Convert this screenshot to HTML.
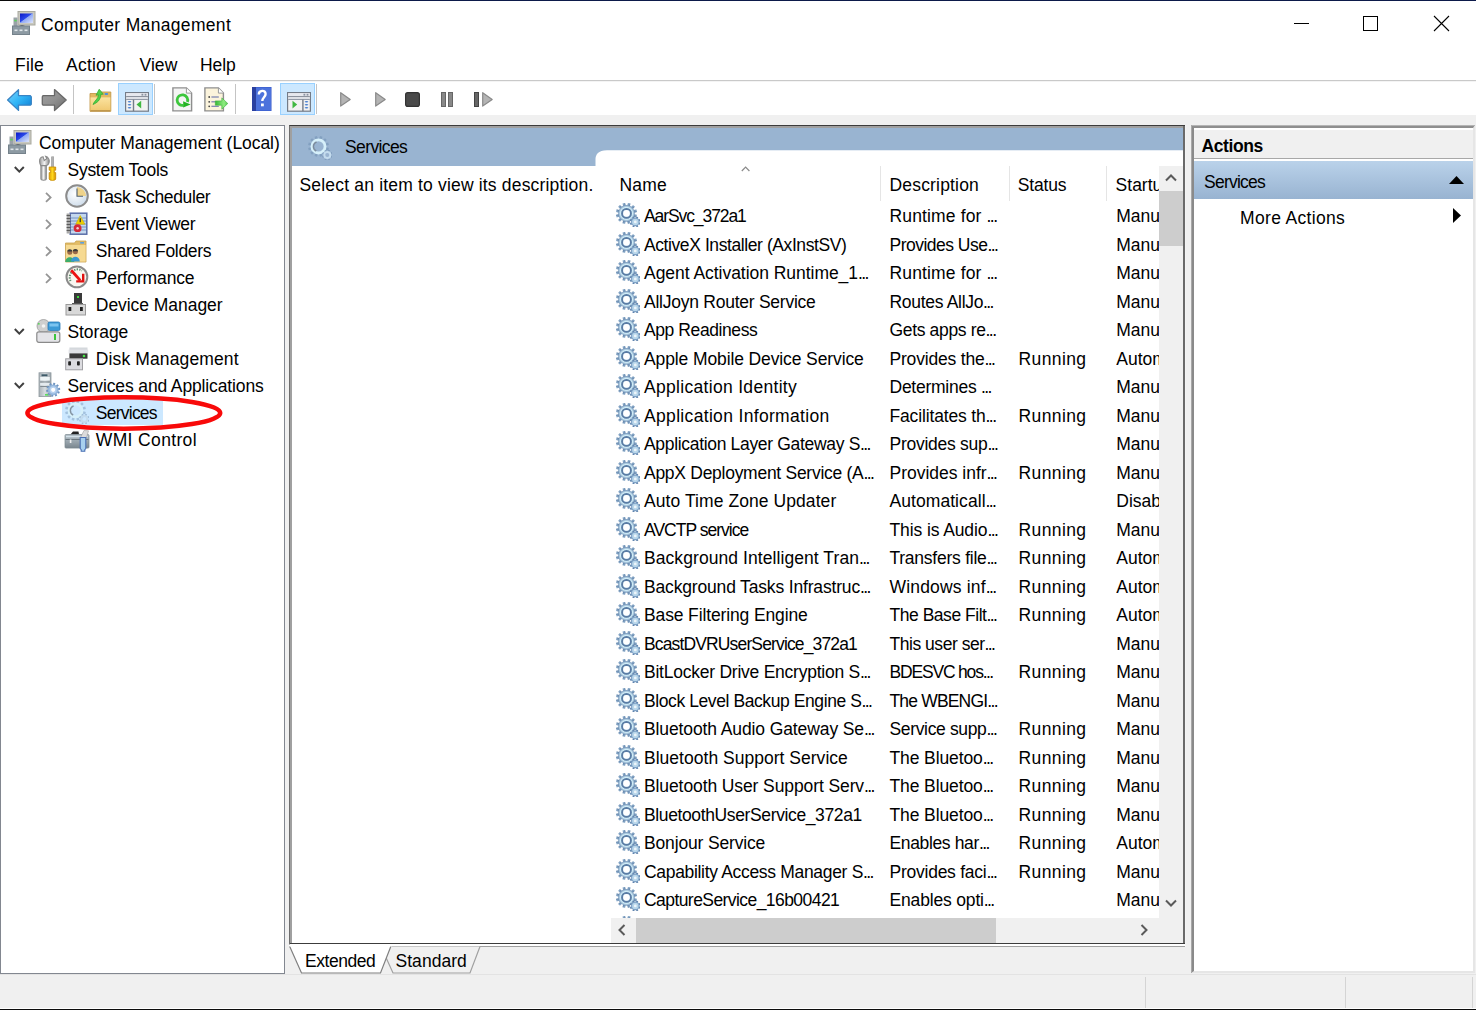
<!DOCTYPE html><html><head><meta charset="utf-8"><style>
html,body{margin:0;padding:0;width:1476px;height:1010px;overflow:hidden;background:#fff}
body{position:relative;font-family:"Liberation Sans",sans-serif;font-size:17.5px;color:#000}
.t{position:absolute;white-space:nowrap;line-height:20px}
.b{position:absolute;box-sizing:border-box}
svg{position:absolute;overflow:visible}
</style></head><body>

<svg width="0" height="0" style="position:absolute">
<defs>
<radialGradient id="gearG" cx="0.45" cy="0.4" r="0.6"><stop offset="0" stop-color="#e4f2fb"/><stop offset="0.6" stop-color="#a9cde6"/><stop offset="1" stop-color="#6f93b3"/></radialGradient>
<symbol id="gear" viewBox="0 0 24 24"><defs><linearGradient id="gT" x1="0" y1="0" x2="1" y2="1"><stop offset="0" stop-color="#9cbad6"/><stop offset="1" stop-color="#4f739c"/></linearGradient><radialGradient id="gB" cx="0.5" cy="0.5" r="0.5"><stop offset="0.5" stop-color="#a8d0ea"/><stop offset="0.72" stop-color="#d2eef8"/><stop offset="1" stop-color="#7898bc"/></radialGradient></defs><g transform="translate(10.5,10.4)" fill="url(#gT)"><rect x="-1.35" y="-10.60" width="2.70" height="3.60" transform="rotate(15.0)"/><rect x="-1.35" y="-10.60" width="2.70" height="3.60" transform="rotate(45.0)"/><rect x="-1.35" y="-10.60" width="2.70" height="3.60" transform="rotate(75.0)"/><rect x="-1.35" y="-10.60" width="2.70" height="3.60" transform="rotate(105.0)"/><rect x="-1.35" y="-10.60" width="2.70" height="3.60" transform="rotate(135.0)"/><rect x="-1.35" y="-10.60" width="2.70" height="3.60" transform="rotate(165.0)"/><rect x="-1.35" y="-10.60" width="2.70" height="3.60" transform="rotate(195.0)"/><rect x="-1.35" y="-10.60" width="2.70" height="3.60" transform="rotate(225.0)"/><rect x="-1.35" y="-10.60" width="2.70" height="3.60" transform="rotate(255.0)"/><rect x="-1.35" y="-10.60" width="2.70" height="3.60" transform="rotate(285.0)"/><rect x="-1.35" y="-10.60" width="2.70" height="3.60" transform="rotate(315.0)"/><rect x="-1.35" y="-10.60" width="2.70" height="3.60" transform="rotate(345.0)"/></g><circle cx="10.5" cy="10.4" r="8.3" fill="url(#gB)"/><circle cx="10.5" cy="10.4" r="4.4" fill="none" stroke="#5a7ca4" stroke-width="2"/><circle cx="10.5" cy="10.4" r="3.3" fill="#fff"/><g transform="translate(19.3,18.9)" fill="#5f84ae"><rect x="-0.95" y="-5.50" width="1.90" height="2.60" transform="rotate(22.0)"/><rect x="-0.95" y="-5.50" width="1.90" height="2.60" transform="rotate(67.0)"/><rect x="-0.95" y="-5.50" width="1.90" height="2.60" transform="rotate(112.0)"/><rect x="-0.95" y="-5.50" width="1.90" height="2.60" transform="rotate(157.0)"/><rect x="-0.95" y="-5.50" width="1.90" height="2.60" transform="rotate(202.0)"/><rect x="-0.95" y="-5.50" width="1.90" height="2.60" transform="rotate(247.0)"/><rect x="-0.95" y="-5.50" width="1.90" height="2.60" transform="rotate(292.0)"/><rect x="-0.95" y="-5.50" width="1.90" height="2.60" transform="rotate(337.0)"/></g><circle cx="19.3" cy="18.9" r="4.3" fill="#7fa2c6"/><circle cx="19.3" cy="18.9" r="3.2" fill="#b8d6ea"/><circle cx="19.3" cy="18.9" r="1.4" fill="#eef5fa"/></symbol>
<symbol id="gearL" viewBox="0 0 24 24"><g transform="translate(10.5,10.4)" fill="#5a7aa0" fill-opacity="0.35"><rect x="-1.25" y="-10.40" width="2.50" height="3.40" transform="rotate(15.0)"/><rect x="-1.25" y="-10.40" width="2.50" height="3.40" transform="rotate(45.0)"/><rect x="-1.25" y="-10.40" width="2.50" height="3.40" transform="rotate(75.0)"/><rect x="-1.25" y="-10.40" width="2.50" height="3.40" transform="rotate(105.0)"/><rect x="-1.25" y="-10.40" width="2.50" height="3.40" transform="rotate(135.0)"/><rect x="-1.25" y="-10.40" width="2.50" height="3.40" transform="rotate(165.0)"/><rect x="-1.25" y="-10.40" width="2.50" height="3.40" transform="rotate(195.0)"/><rect x="-1.25" y="-10.40" width="2.50" height="3.40" transform="rotate(225.0)"/><rect x="-1.25" y="-10.40" width="2.50" height="3.40" transform="rotate(255.0)"/><rect x="-1.25" y="-10.40" width="2.50" height="3.40" transform="rotate(285.0)"/><rect x="-1.25" y="-10.40" width="2.50" height="3.40" transform="rotate(315.0)"/><rect x="-1.25" y="-10.40" width="2.50" height="3.40" transform="rotate(345.0)"/></g><circle cx="10.5" cy="10.4" r="6.6" fill="none" stroke="#d6f0fa" stroke-width="2.8"/><path d="M8.2 15 A5 5 0 0 1 8.6 5.8" fill="none" stroke="#6a7684" stroke-width="1.4" stroke-opacity="0.75"/><g transform="translate(19.3,18.9)" fill="#5a7aa0" fill-opacity="0.4"><rect x="-0.85" y="-5.30" width="1.70" height="2.50" transform="rotate(22.0)"/><rect x="-0.85" y="-5.30" width="1.70" height="2.50" transform="rotate(67.0)"/><rect x="-0.85" y="-5.30" width="1.70" height="2.50" transform="rotate(112.0)"/><rect x="-0.85" y="-5.30" width="1.70" height="2.50" transform="rotate(157.0)"/><rect x="-0.85" y="-5.30" width="1.70" height="2.50" transform="rotate(202.0)"/><rect x="-0.85" y="-5.30" width="1.70" height="2.50" transform="rotate(247.0)"/><rect x="-0.85" y="-5.30" width="1.70" height="2.50" transform="rotate(292.0)"/><rect x="-0.85" y="-5.30" width="1.70" height="2.50" transform="rotate(337.0)"/></g><circle cx="19.3" cy="18.9" r="3" fill="none" stroke="#c4dcee" stroke-width="2"/></symbol>
<linearGradient id="scrG" x1="0" y1="0" x2="1" y2="1"><stop offset="0" stop-color="#0a18c8"/><stop offset="0.45" stop-color="#2a48e8"/><stop offset="0.5" stop-color="#8fa8f4"/><stop offset="1" stop-color="#dfe6fb"/></linearGradient>
<symbol id="comp" viewBox="0 0 24 24">
<rect x="6" y="0.5" width="17" height="13.5" fill="#c9c9c0" stroke="#a9a99f" stroke-width="1"/>
<rect x="8" y="2.5" width="13" height="9.5" fill="url(#scrG)"/>
<rect x="1.5" y="6.5" width="4" height="9" fill="#9aa2a8"/>
<rect x="2.3" y="8.8" width="2.4" height="1.6" fill="#5ad35a"/>
<path d="M6 15.5 q4-3 8 0z" fill="#555"/>
<rect x="0.5" y="15" width="17" height="8.5" fill="#8d9aa3" stroke="#75828b" stroke-width="1"/>
<g fill="#e0e6ea"><rect x="2.5" y="18.5" width="3" height="1.6"/><rect x="7.5" y="18.5" width="3" height="1.6"/><rect x="12.5" y="18.5" width="3" height="1.6"/></g>
</symbol>
<linearGradient id="arrB" x1="0" y1="0" x2="0" y2="1"><stop offset="0" stop-color="#6cc7f7"/><stop offset="0.5" stop-color="#27a4ee"/><stop offset="1" stop-color="#1478c8"/></linearGradient>
<linearGradient id="arrG" x1="0" y1="0" x2="0" y2="1"><stop offset="0" stop-color="#a8a8a8"/><stop offset="0.5" stop-color="#858585"/><stop offset="1" stop-color="#5e5e5e"/></linearGradient>
</defs></svg>

<div class="b" style="left:0px;top:0px;width:1476px;height:1px;background:#0c1a4a"></div>
<div class="b" style="left:0px;top:0px;width:71px;height:1px;background:#0a0a0a"></div>
<svg style="left:12px;top:11px" width="24" height="24"><use href="#comp"/></svg>
<div class="t" style="left:41px;top:14.600000000000001px;letter-spacing:0.330px;">Computer Management</div>
<div class="b" style="left:1294px;top:23px;width:15px;height:1px;background:#000"></div>
<div class="b" style="left:1363px;top:16px;width:15px;height:15px;border:1px solid #000"></div>
<svg style="left:1433px;top:15px" width="17" height="17"><path d="M1 1L16 16M16 1L1 16" stroke="#000" stroke-width="1.1"/></svg>
<div class="t" style="left:15px;top:55px;letter-spacing:0.199px;">File</div>
<div class="t" style="left:66px;top:55px;letter-spacing:0.232px;">Action</div>
<div class="t" style="left:139.5px;top:55px;letter-spacing:0.058px;">View</div>
<div class="t" style="left:200px;top:55px;letter-spacing:-0.067px;">Help</div>
<div class="b" style="left:0px;top:80px;width:1476px;height:1px;background:#c9c9c9"></div>
<div class="b" style="left:0px;top:81px;width:1476px;height:1px;background:#f4f4f4"></div>
<div class="b" style="left:0px;top:115px;width:1476px;height:895px;background:#f0f0f0"></div>
<svg style="left:7px;top:89px" width="25" height="22"><defs><linearGradient id="abg" x1="0" y1="0" x2="1" y2="1"><stop offset="0" stop-color="#7cd4fc"/><stop offset="0.5" stop-color="#30b4f6"/><stop offset="1" stop-color="#0a78d0"/></linearGradient></defs><path d="M0.6 11 L11.5 0.6 V6.6 H23.3 L24.3 7.8 V15.2 L23.3 16.2 H11.5 V21.4 Z" fill="url(#abg)" stroke="#3a84c4" stroke-width="1.3" stroke-linejoin="round"/></svg>
<svg style="left:42px;top:89px" width="25" height="22"><defs><linearGradient id="afg" x1="0" y1="0" x2="1" y2="1"><stop offset="0" stop-color="#a0a0a0"/><stop offset="0.5" stop-color="#909090"/><stop offset="1" stop-color="#6a6a6a"/></linearGradient></defs><path d="M24.2 11 L12.5 0.6 V6.6 H1 L0.3 7.8 V15.2 L1 16.2 H12.5 V21.6 Z" fill="url(#afg)" stroke="#686868" stroke-width="1.3" stroke-linejoin="round"/></svg>
<div class="b" style="left:73px;top:85px;width:1px;height:29px;background:#c4c4c4"></div>
<svg style="left:89px;top:88px" width="23" height="24"><defs><linearGradient id="fdg" x1="0" y1="0" x2="0" y2="1"><stop offset="0" stop-color="#fbe3a0"/><stop offset="1" stop-color="#f0c870"/></linearGradient></defs><path d="M1 5.5 H11 L12 4 H21.8 V23.3 H1 Z" fill="#e2b860" stroke="#c49a4c" stroke-width="0.9"/><rect x="1.5" y="9.4" width="19.8" height="13.4" fill="url(#fdg)"/><rect x="1.5" y="22.3" width="19.8" height="1" fill="#b08840"/><rect x="15.5" y="5" width="3.6" height="2" rx="1" fill="#4a90e0"/><path d="M4 16.5 C5.5 12.5 9 11.5 9.6 6.8 L7 7.2 L10.2 1.2 L14.3 6.2 L11.8 6.4 C11.6 12 8.5 14.5 4 16.5Z" fill="#52d04a" stroke="#2fa82f" stroke-width="0.7"/></svg>
<div class="b" style="left:118px;top:83px;width:35px;height:32px;background:#cce8ff;border:1px solid #99d1ff"></div>
<svg style="left:124.5px;top:91.5px" width="24" height="20"><rect x="0.6" y="0.6" width="22.8" height="18.6" fill="#f2f2f2" stroke="#747c88" stroke-width="1.2"/><rect x="1.2" y="1.2" width="21.6" height="3" fill="#e6e8ee"/><rect x="16.5" y="1.8" width="1.8" height="1.8" fill="#8a92a0"/><rect x="19.6" y="1.8" width="1.8" height="1.8" fill="#8a92a0"/><rect x="1.2" y="4.2" width="21.6" height="1.1" fill="#747c88"/><rect x="1.2" y="5.3" width="21.6" height="1.6" fill="#e6e8ee"/><rect x="1.2" y="6.9" width="21.6" height="1" fill="#8a92a0"/><rect x="7.8" y="7.6" width="1.4" height="11.6" fill="#747c88"/><g fill="#4a80d0"><ellipse cx="4.5" cy="9.8" rx="1.8" ry="0.7"/><ellipse cx="4.5" cy="12.8" rx="1.8" ry="0.7"/><ellipse cx="4.5" cy="15.8" rx="1.8" ry="0.7"/></g><path d="M16.2 8.8 L11.5 12.6 L16.2 16.6Z" fill="#40b840"/></svg>
<div class="b" style="left:154px;top:84px;width:1px;height:30px;background:#c4c4c4"></div>
<svg style="left:172px;top:87px" width="21" height="25"><path d="M0.9 0.9 H14.4 L19.6 6.1 V23.9 H0.9Z" fill="#f4f4f4" stroke="#8e8e8e" stroke-width="1.4"/><path d="M14.4 0.9 V6.1 H19.6" fill="#fff" stroke="#9a9a9a" stroke-width="1"/><path d="M15.38 14.91 A5.3 5.3 0 1 0 11.32 18.32" fill="none" stroke="#3cc63c" stroke-width="2.8"/><path d="M11.2 14.2 L11.2 20.4 L18.6 17.6Z" fill="#22b422"/></svg>
<svg style="left:204px;top:87px" width="25" height="25"><defs><linearGradient id="exg" x1="0" y1="0" x2="1" y2="0"><stop offset="0" stop-color="#38b838"/><stop offset="0.7" stop-color="#90ec80"/><stop offset="1" stop-color="#50c850"/></linearGradient></defs><path d="M0.9 0.9 H14.4 L19.4 6.1 V23.9 H0.9Z" fill="#fcf4dc" stroke="#8e8e8e" stroke-width="1.4"/><path d="M14.4 0.9 V6.1 H19.4" fill="#fff" stroke="#9a9a9a" stroke-width="1"/><g fill="#444"><circle cx="5.2" cy="10" r="0.9"/><circle cx="5.2" cy="14.8" r="0.9"/><circle cx="5.2" cy="19.3" r="0.9"/></g><g fill="#7880b0"><rect x="7.4" y="9.4" width="7.4" height="1.2"/><rect x="7.4" y="14.2" width="7.4" height="1.2"/><rect x="7.4" y="18.7" width="7.4" height="1.2"/></g><path d="M11.3 13.9 H17.8 V10.9 L23.8 16.5 L17.8 22.2 V18.2 H11.3Z" fill="url(#exg)" stroke="#40b040" stroke-width="0.6"/></svg>
<div class="b" style="left:235px;top:84px;width:1px;height:30px;background:#c4c4c4"></div>
<svg style="left:252px;top:87px" width="20" height="25"><rect x="0" y="0" width="19.5" height="24" fill="#3557c8"/><rect x="0" y="0" width="4" height="24" fill="#2a40a0"/><rect x="4" y="0.5" width="15" height="23" fill="#4c72dc"/><path d="M6.8 7.5 C6.8 3 13.6 2.5 13.6 7 C13.6 10 10.3 10.5 10.3 14" fill="none" stroke="#fff" stroke-width="2.4"/><rect x="9" y="16.5" width="2.8" height="2.8" fill="#fff"/></svg>
<div class="b" style="left:280px;top:83px;width:35px;height:32px;background:#cce8ff;border:1px solid #99d1ff"></div>
<svg style="left:286.5px;top:91.5px" width="24" height="20"><rect x="0.6" y="0.6" width="22.8" height="18.6" fill="#f2f2f2" stroke="#747c88" stroke-width="1.2"/><rect x="1.2" y="1.2" width="21.6" height="3" fill="#e6e8ee"/><rect x="16.5" y="1.8" width="1.8" height="1.8" fill="#8a92a0"/><rect x="19.6" y="1.8" width="1.8" height="1.8" fill="#8a92a0"/><rect x="1.2" y="4.2" width="21.6" height="1.1" fill="#747c88"/><rect x="1.2" y="5.3" width="21.6" height="1.6" fill="#e6e8ee"/><rect x="1.2" y="6.9" width="21.6" height="1" fill="#8a92a0"/><rect x="15.2" y="7.6" width="1.4" height="11.6" fill="#747c88"/><g fill="#4a80d0"><ellipse cx="19.5" cy="9.8" rx="1.8" ry="0.7"/><ellipse cx="19.5" cy="12.8" rx="1.8" ry="0.7"/><ellipse cx="19.5" cy="15.8" rx="1.8" ry="0.7"/></g><path d="M5.5 8.8 L10.2 12.6 L5.5 16.6Z" fill="#40b840"/></svg>
<div class="b" style="left:316px;top:84px;width:1px;height:30px;background:#c4c4c4"></div>
<svg style="left:340px;top:92px" width="11" height="15"><path d="M0.7 0.7 L10.2 7.4 L0.7 14.1Z" fill="#b4b4b4" stroke="#8a8a8a" stroke-width="1.2" stroke-linejoin="round"/></svg>
<svg style="left:374.5px;top:92px" width="11" height="15"><path d="M0.7 0.7 L10.2 7.4 L0.7 14.1Z" fill="#b4b4b4" stroke="#8a8a8a" stroke-width="1.2" stroke-linejoin="round"/></svg>
<svg style="left:405px;top:92px" width="15" height="15"><rect x="0.6" y="0.6" width="13.8" height="13.8" rx="2.2" fill="#4a4a4a" stroke="#333" stroke-width="1.2"/></svg>
<div class="b" style="left:441px;top:92px;width:4.5px;height:15px;background:#888;border:1px solid #666"></div>
<div class="b" style="left:448.3px;top:92px;width:4.5px;height:15px;background:#888;border:1px solid #666"></div>
<div class="b" style="left:474px;top:92px;width:4.8px;height:15px;background:#666;border:1px solid #444"></div>
<svg style="left:481.5px;top:92px" width="11" height="15"><path d="M0.7 0.7 L10.2 7.4 L0.7 14.1Z" fill="#b4b4b4" stroke="#8a8a8a" stroke-width="1.2" stroke-linejoin="round"/></svg>
<div class="b" style="left:0px;top:125px;width:285px;height:849px;background:#fff;border:1px solid #828790"></div>
<div class="b" style="left:61.5px;top:399px;width:101.5px;height:26px;background:#cce8ff"></div>
<svg style="left:7.5px;top:129.5px" width="24" height="24" viewBox="0 0 24 24"><use href="#comp"/></svg>
<div class="t" style="left:39px;top:133px;letter-spacing:-0.055px;">Computer Management (Local)</div>
<svg style="left:13.5px;top:166px" width="12" height="8"><path d="M0.8 1 L5.3 5.6 L9.8 1" fill="none" stroke="#404040" stroke-width="2"/></svg>
<svg style="left:36px;top:157.0px" width="24" height="24" viewBox="0 0 24 24"><defs><linearGradient id="wrG" x1="0" y1="0" x2="1" y2="0"><stop offset="0" stop-color="#9a9a9a"/><stop offset="0.5" stop-color="#f4f4f4"/><stop offset="1" stop-color="#8a8a8a"/></linearGradient><linearGradient id="sdG" x1="0" y1="0" x2="1" y2="0"><stop offset="0" stop-color="#e0a000"/><stop offset="0.5" stop-color="#ffd820"/><stop offset="1" stop-color="#d49000"/></linearGradient></defs><path d="M4.9 7.5 L4.9 21.8 Q4.9 23.2 7.6 23.2 Q10.3 23.2 10.3 21.8 L10.3 7.5Z" fill="url(#wrG)" stroke="#8a8a8a" stroke-width="1.1"/><path d="M3.6 4.5 C3.4 1.8 5 0 7 -0.3 L8.2 3.5 L10.8 1.6 L9.6 -0.6 C12.2 0 13.6 2.6 13.2 5 C12.8 7.2 11.2 8.4 10.3 8.6 L4.9 8.6 C4.2 7.8 3.7 6.4 3.6 4.5Z" fill="url(#wrG)" stroke="#8a8a8a" stroke-width="1.1"/><rect x="15.3" y="-0.5" width="2.6" height="10.5" fill="#8c8c8c"/><rect x="16.4" y="-0.5" width="1" height="10.5" fill="#c8c8c8"/><path d="M13.2 10 H19.7 V13.2 H18.3 V15.6 H19.7 V22 Q19.7 23.4 16.45 23.4 Q13.2 23.4 13.2 22 V15.6 H14.6 V13.2 H13.2Z" fill="url(#sdG)" stroke="#c88a00" stroke-width="0.8"/></svg>
<div class="t" style="left:67.5px;top:160px;letter-spacing:-0.268px;">System Tools</div>
<svg style="left:44.5px;top:191.5px" width="8" height="11"><path d="M1 0.9 L5.6 5.4 L1 9.9" fill="none" stroke="#959595" stroke-width="1.8"/></svg>
<svg style="left:64.5px;top:183.5px" width="24" height="24" viewBox="0 0 24 24"><defs><radialGradient id="clk" cx="0.4" cy="0.4" r="0.7"><stop offset="0" stop-color="#ffffff"/><stop offset="1" stop-color="#c8d8e8"/></radialGradient></defs><circle cx="12" cy="12" r="10.8" fill="url(#clk)" stroke="#8c8c8c" stroke-width="2"/><path d="M12 3 A9 9 0 0 1 21 12 H12Z" fill="#efd38a"/><path d="M12 4.5 V12.2 H18" fill="none" stroke="#50606e" stroke-width="1.1"/></svg>
<div class="t" style="left:95.8px;top:187px;letter-spacing:-0.374px;">Task Scheduler</div>
<svg style="left:44.5px;top:218.5px" width="8" height="11"><path d="M1 0.9 L5.6 5.4 L1 9.9" fill="none" stroke="#959595" stroke-width="1.8"/></svg>
<svg style="left:64.5px;top:210.5px" width="24" height="24" viewBox="0 0 24 24"><rect x="5.2" y="2.2" width="16.6" height="21" fill="#c4d8ee" stroke="#5a6ea8" stroke-width="1.5"/><g fill="#8ea8d0"><rect x="6" y="6.3" width="15" height="1.4"/><rect x="6" y="9.3" width="15" height="1.4"/><rect x="6" y="12.3" width="15" height="1.4"/><rect x="6" y="15.3" width="15" height="1.4"/><rect x="6" y="18.3" width="15" height="1.4"/></g><rect x="1.6" y="2.5" width="3.4" height="20" fill="#a8a8a8"/><g fill="#5a5a5a"><rect x="1.6" y="4" width="4" height="1"/><rect x="1.6" y="7" width="4" height="1"/><rect x="1.6" y="10" width="4" height="1"/><rect x="1.6" y="13" width="4" height="1"/><rect x="1.6" y="16" width="4" height="1"/><rect x="1.6" y="19" width="4" height="1"/></g><path d="M15.2 4.5 L19.8 13.2 H10.8Z" fill="#f0d000" stroke="#c8a800" stroke-width="0.6"/><rect x="14.6" y="7.2" width="1.3" height="4" fill="#333"/><circle cx="12.6" cy="17.2" r="3.9" fill="#d42a3a"/><circle cx="12.6" cy="17.2" r="1.2" fill="#f4d0d4"/></svg>
<div class="t" style="left:95.8px;top:214px;letter-spacing:-0.272px;">Event Viewer</div>
<svg style="left:44.5px;top:245.5px" width="8" height="11"><path d="M1 0.9 L5.6 5.4 L1 9.9" fill="none" stroke="#959595" stroke-width="1.8"/></svg>
<svg style="left:64.5px;top:237.5px" width="24" height="24" viewBox="0 0 24 24"><path d="M0.5 5 H9.5 L11 3 H21 V24 H0.5Z" fill="#e2bc68" stroke="#c9a24e" stroke-width="0.8"/><rect x="1" y="7" width="19.6" height="16.6" fill="#f6da92"/><rect x="15.2" y="4" width="3.8" height="1.6" fill="#5aa0e0"/><circle cx="4.8" cy="14.2" r="2.5" fill="#9a6a48"/><path d="M2.2 13.6 C2.2 10.6 7.4 10.6 7.4 13.6Z" fill="#3a3a3a"/><path d="M0.3 24 C0.3 17.5 9.3 17.5 9.3 24Z" fill="#3cae6c"/><circle cx="10.4" cy="13.8" r="2.5" fill="#9a6a48"/><path d="M7.8 13.2 C7.8 10.2 13 10.2 13 13.2Z" fill="#3a3a3a"/><path d="M6 23.6 C6 17.2 14.8 17.2 14.8 23.6Z" fill="#3a98d0"/></svg>
<div class="t" style="left:95.8px;top:241px;letter-spacing:-0.297px;">Shared Folders</div>
<svg style="left:44.5px;top:272.5px" width="8" height="11"><path d="M1 0.9 L5.6 5.4 L1 9.9" fill="none" stroke="#959595" stroke-width="1.8"/></svg>
<svg style="left:64.5px;top:264.5px" width="24" height="24" viewBox="0 0 24 24"><circle cx="11.9" cy="11.9" r="10.4" fill="#f8f6f0" stroke="#8a8a8a" stroke-width="2"/><path d="M5.6 16 A8 8 0 0 1 17 5.6" fill="none" stroke="#5e8a6e" stroke-width="2" stroke-dasharray="1.3 1.2"/><path d="M6.2 5.2 L15.2 15.4" stroke="#ec1010" stroke-width="2.8"/><path d="M18.2 8.8 V16.4 H11.2" fill="none" stroke="#e01010" stroke-width="2.4"/></svg>
<div class="t" style="left:95.8px;top:268px;letter-spacing:-0.139px;">Performance</div>
<svg style="left:64.5px;top:291.5px" width="24" height="24" viewBox="0 0 24 24"><rect x="9" y="1" width="8" height="11" fill="#3a3a3a"/><rect x="12" y="4" width="2" height="2" fill="#3cdc3c"/><rect x="7" y="11" width="11" height="2" fill="#555"/><rect x="1" y="12.5" width="19.5" height="10.5" fill="#d8d8d8" stroke="#9a9a9a" stroke-width="1"/><rect x="3.5" y="15" width="2.8" height="4" fill="#222"/><rect x="15" y="15" width="2.8" height="4" fill="#222"/></svg>
<div class="t" style="left:95.8px;top:295px;letter-spacing:-0.049px;">Device Manager</div>
<svg style="left:13.5px;top:328px" width="12" height="8"><path d="M0.8 1 L5.3 5.6 L9.8 1" fill="none" stroke="#404040" stroke-width="2"/></svg>
<svg style="left:36px;top:319.0px" width="24" height="24" viewBox="0 0 24 24"><circle cx="7.5" cy="7" r="6.5" fill="#cfcfcf" stroke="#9a9a9a" stroke-width="0.8"/><circle cx="7.5" cy="7" r="1.8" fill="#f4f4f4"/><rect x="2" y="4" width="1.6" height="1.6" fill="#5cd85c"/><rect x="12" y="3" width="12" height="8.5" rx="1.5" fill="#3c9ad6" stroke="#2a7ab6" stroke-width="0.8"/><rect x="13.5" y="4.5" width="9" height="3" fill="#7cc4f0"/><rect x="0.8" y="12.8" width="23" height="10.5" rx="2" fill="#e4e4e8" stroke="#8a8a8a" stroke-width="1.2"/><rect x="18" y="15" width="2" height="6" fill="#3cc43c"/></svg>
<div class="t" style="left:67.5px;top:322px;letter-spacing:-0.083px;">Storage</div>
<svg style="left:64.5px;top:345.5px" width="24" height="24" viewBox="0 0 24 24"><rect x="4.4" y="1.5" width="18.1" height="6" fill="#d4d8dc"/><rect x="3.6" y="3.6" width="19.6" height="3.8" fill="#e0e2e6"/><rect x="4.4" y="7.4" width="18.1" height="5.3" fill="#3a3a3a"/><circle cx="19" cy="10" r="1.3" fill="#48e848"/><rect x="0.7" y="12.8" width="16.8" height="11" fill="#dcdce0" stroke="#a0a0a4" stroke-width="1"/><rect x="3.2" y="15.3" width="2.8" height="4.3" rx="0.8" fill="#222"/><rect x="12" y="15.3" width="2.8" height="4.3" rx="0.8" fill="#222"/></svg>
<div class="t" style="left:95.8px;top:349px;letter-spacing:0.125px;">Disk Management</div>
<svg style="left:13.5px;top:382px" width="12" height="8"><path d="M0.8 1 L5.3 5.6 L9.8 1" fill="none" stroke="#404040" stroke-width="2"/></svg>
<svg style="left:36px;top:373.0px" width="24" height="24" viewBox="0 0 24 24"><defs><linearGradient id="twG" x1="0" y1="0" x2="1" y2="0"><stop offset="0" stop-color="#a8b0b6"/><stop offset="0.5" stop-color="#d8dee2"/><stop offset="1" stop-color="#9aa4aa"/></linearGradient></defs><rect x="3" y="-0.2" width="12" height="23.8" fill="url(#twG)" stroke="#8f999f" stroke-width="0.8"/><rect x="5.5" y="1.3" width="6" height="2" fill="#3d5a68"/><rect x="4.2" y="4" width="9.6" height="3.5" fill="#eef4f6"/><rect x="4.2" y="8.5" width="9.6" height="0.9" fill="#7a848a"/><rect x="4.2" y="10" width="9.6" height="2.5" fill="#e4eaee"/><rect x="4.2" y="13" width="9.6" height="0.9" fill="#7a848a"/><rect x="9" y="21" width="3.5" height="1.6" fill="#5ae05a"/><g transform="translate(17.2,16.8)" fill="#6f94c0"><rect x="-1.00" y="-7.00" width="2.00" height="2.80" transform="rotate(9.0)"/><rect x="-1.00" y="-7.00" width="2.00" height="2.80" transform="rotate(45.0)"/><rect x="-1.00" y="-7.00" width="2.00" height="2.80" transform="rotate(81.0)"/><rect x="-1.00" y="-7.00" width="2.00" height="2.80" transform="rotate(117.0)"/><rect x="-1.00" y="-7.00" width="2.00" height="2.80" transform="rotate(153.0)"/><rect x="-1.00" y="-7.00" width="2.00" height="2.80" transform="rotate(189.0)"/><rect x="-1.00" y="-7.00" width="2.00" height="2.80" transform="rotate(225.0)"/><rect x="-1.00" y="-7.00" width="2.00" height="2.80" transform="rotate(261.0)"/><rect x="-1.00" y="-7.00" width="2.00" height="2.80" transform="rotate(297.0)"/><rect x="-1.00" y="-7.00" width="2.00" height="2.80" transform="rotate(333.0)"/></g><circle cx="17.2" cy="16.8" r="5.4" fill="#94b6dc"/><circle cx="17.2" cy="16.8" r="3.6" fill="#b8d2ee"/><circle cx="17.2" cy="16.8" r="2.1" fill="#fff"/></svg>
<div class="t" style="left:67.5px;top:376px;letter-spacing:-0.131px;">Services and Applications</div>
<svg style="left:64.5px;top:399.5px" width="24" height="24" viewBox="0 0 24 24"><use href="#gearL"/></svg>
<div class="t" style="left:95.8px;top:403px;letter-spacing:-0.758px;">Services</div>
<svg style="left:64.5px;top:426.5px" width="24" height="24" viewBox="0 0 24 24"><defs><linearGradient id="tbG" x1="0" y1="0" x2="0" y2="1"><stop offset="0" stop-color="#b8c4cc"/><stop offset="0.5" stop-color="#9aa6ae"/><stop offset="1" stop-color="#7a868e"/></linearGradient></defs><path d="M5.5 7.5 L8 4.6 H13.5 L14 7.5Z" fill="#222"/><rect x="0" y="7.5" width="24" height="13.6" rx="1" fill="url(#tbG)" stroke="#7a868e" stroke-width="0.7"/><rect x="1" y="9" width="22" height="1.2" fill="#d4e2ea"/><rect x="0.5" y="12" width="23" height="1" fill="#6a767e"/><rect x="4.8" y="12.5" width="1.6" height="3.5" fill="#f0f0f0"/><path d="M15.5 10.5 L19 3.5 L23.5 3.8 L21.5 10.5Z" fill="#dcdcdc" stroke="#a0a0a0" stroke-width="0.6"/><path d="M15.2 10.5 H20.8 V21.5 L19.8 22.6 V24.2 H16.2 V22.6 L15.2 21.5Z" fill="#a8d0ee" stroke="#4a70b4" stroke-width="1.1"/></svg>
<div class="t" style="left:95.8px;top:430px;letter-spacing:0.357px;">WMI Control</div>
<svg style="left:0px;top:380px" width="250" height="60"><ellipse cx="123.8" cy="33" rx="96.4" ry="15.7" fill="none" stroke="#f80a0a" stroke-width="4.6"/></svg>
<div class="b" style="left:289px;top:125px;width:897px;height:821px;background:#fff;border-top:1px solid #3c3c3c;border-left:1px solid #6e6e6e;border-right:1px solid #f8f8f8"></div>
<div class="b" style="left:290px;top:126px;width:895px;height:2px;background:#a0a0a0"></div>
<div class="b" style="left:290px;top:126px;width:2px;height:818px;background:#a0a0a0"></div>
<div class="b" style="left:1183px;top:126px;width:2px;height:818px;background:#6a6a6a"></div>
<div class="b" style="left:290px;top:943px;width:895px;height:1px;background:#3c3c3c"></div>
<div class="b" style="left:289px;top:946px;width:897px;height:1px;background:#a0a0a0"></div>
<div class="b" style="left:1185px;top:125px;width:1px;height:822px;background:#f4f4f4"></div>
<div class="b" style="left:292px;top:128px;width:891px;height:38px;background:#99b4d1"></div>
<svg style="left:594px;top:150px" width="589" height="16"><path d="M1.5 16 V9 C1.5 5 4 0.3 13 0.3 H589 V16Z" fill="#fff"/></svg>
<svg style="left:307.5px;top:136px" width="24" height="24"><use href="#gearL"/></svg>
<div class="t" style="left:345px;top:137px;letter-spacing:-0.616px;">Services</div>
<div class="t" style="left:299.5px;top:174.7px;letter-spacing:0.181px;">Select an item to view its description.</div>
<div class="t" style="left:619.5px;top:174.7px;letter-spacing:0.204px;">Name</div>
<div class="t" style="left:889.5px;top:174.7px;letter-spacing:0.175px;">Description</div>
<div class="t" style="left:1017.8px;top:174.7px;letter-spacing:-0.162px;">Status</div>
<div style="position:absolute;left:1115px;top:166px;width:44px;height:40px;overflow:hidden">
<div class="t" style="left:0.6px;top:8.699999999999989px;">Startup Type</div>
</div>
<div class="b" style="left:880px;top:166px;width:1px;height:35px;background:#e5e5e5"></div>
<div class="b" style="left:1009px;top:166px;width:1px;height:35px;background:#e5e5e5"></div>
<div class="b" style="left:1106px;top:166px;width:1px;height:35px;background:#e5e5e5"></div>
<svg style="left:741px;top:166px" width="10" height="6"><path d="M0.8 5 L4.6 1 L8.4 5" fill="none" stroke="#8a8a8a" stroke-width="1.2"/></svg>
<div style="position:absolute;left:611px;top:201px;width:548px;height:717px;overflow:hidden">
<svg style="left:5.3px;top:2.0px" width="24" height="24" viewBox="0 0 24 24"><use href="#gear"/></svg>
<div class="t" style="left:33px;top:5.199999999999989px;letter-spacing:-1.092px;">AarSvc_372a1</div>
<div class="t" style="left:278.5px;top:5.199999999999989px;letter-spacing:0.149px;">Runtime for <span style="letter-spacing:-1.6px">...</span></div>
<div style="position:absolute;left:504.8px;top:0.0px;width:43.2px;height:28.5px;overflow:hidden">
<div class="t" style="left:0.5px;top:5.199999999999989px;">Manual</div>
</div>
<svg style="left:5.3px;top:30.5px" width="24" height="24" viewBox="0 0 24 24"><use href="#gear"/></svg>
<div class="t" style="left:33px;top:33.69999999999999px;letter-spacing:-0.413px;">ActiveX Installer (AxInstSV)</div>
<div class="t" style="left:278.5px;top:33.69999999999999px;letter-spacing:-0.515px;">Provides Use<span style="letter-spacing:-1.6px">...</span></div>
<div style="position:absolute;left:504.8px;top:28.5px;width:43.2px;height:28.5px;overflow:hidden">
<div class="t" style="left:0.5px;top:5.199999999999989px;">Manual</div>
</div>
<svg style="left:5.3px;top:59.0px" width="24" height="24" viewBox="0 0 24 24"><use href="#gear"/></svg>
<div class="t" style="left:33px;top:62.19999999999999px;letter-spacing:-0.038px;">Agent Activation Runtime_1<span style="letter-spacing:-1.6px">...</span></div>
<div class="t" style="left:278.5px;top:62.19999999999999px;letter-spacing:0.149px;">Runtime for <span style="letter-spacing:-1.6px">...</span></div>
<div style="position:absolute;left:504.8px;top:57.0px;width:43.2px;height:28.5px;overflow:hidden">
<div class="t" style="left:0.5px;top:5.199999999999989px;">Manual</div>
</div>
<svg style="left:5.3px;top:87.5px" width="24" height="24" viewBox="0 0 24 24"><use href="#gear"/></svg>
<div class="t" style="left:33px;top:90.69999999999999px;letter-spacing:-0.249px;">AllJoyn Router Service</div>
<div class="t" style="left:278.5px;top:90.69999999999999px;letter-spacing:-0.307px;">Routes AllJo<span style="letter-spacing:-1.6px">...</span></div>
<div style="position:absolute;left:504.8px;top:85.5px;width:43.2px;height:28.5px;overflow:hidden">
<div class="t" style="left:0.5px;top:5.199999999999989px;">Manual</div>
</div>
<svg style="left:5.3px;top:116.0px" width="24" height="24" viewBox="0 0 24 24"><use href="#gear"/></svg>
<div class="t" style="left:33px;top:119.19999999999999px;letter-spacing:-0.409px;">App Readiness</div>
<div class="t" style="left:278.5px;top:119.19999999999999px;letter-spacing:-0.341px;">Gets apps re<span style="letter-spacing:-1.6px">...</span></div>
<div style="position:absolute;left:504.8px;top:114.0px;width:43.2px;height:28.5px;overflow:hidden">
<div class="t" style="left:0.5px;top:5.199999999999989px;">Manual</div>
</div>
<svg style="left:5.3px;top:144.5px" width="24" height="24" viewBox="0 0 24 24"><use href="#gear"/></svg>
<div class="t" style="left:33px;top:147.7px;letter-spacing:-0.114px;">Apple Mobile Device Service</div>
<div class="t" style="left:278.5px;top:147.7px;letter-spacing:-0.190px;">Provides the<span style="letter-spacing:-1.6px">...</span></div>
<div class="t" style="left:407.5px;top:147.7px;letter-spacing:0.399px;">Running</div>
<div style="position:absolute;left:504.8px;top:142.5px;width:43.2px;height:28.5px;overflow:hidden">
<div class="t" style="left:0.5px;top:5.199999999999989px;">Automatic</div>
</div>
<svg style="left:5.3px;top:173.0px" width="24" height="24" viewBox="0 0 24 24"><use href="#gear"/></svg>
<div class="t" style="left:33px;top:176.2px;letter-spacing:0.310px;">Application Identity</div>
<div class="t" style="left:278.5px;top:176.2px;letter-spacing:-0.259px;">Determines <span style="letter-spacing:-1.6px">...</span></div>
<div style="position:absolute;left:504.8px;top:171.0px;width:43.2px;height:28.5px;overflow:hidden">
<div class="t" style="left:0.5px;top:5.199999999999989px;">Manual</div>
</div>
<svg style="left:5.3px;top:201.5px" width="24" height="24" viewBox="0 0 24 24"><use href="#gear"/></svg>
<div class="t" style="left:33px;top:204.7px;letter-spacing:0.330px;">Application Information</div>
<div class="t" style="left:278.5px;top:204.7px;letter-spacing:-0.152px;">Facilitates th<span style="letter-spacing:-1.6px">...</span></div>
<div class="t" style="left:407.5px;top:204.7px;letter-spacing:0.399px;">Running</div>
<div style="position:absolute;left:504.8px;top:199.5px;width:43.2px;height:28.5px;overflow:hidden">
<div class="t" style="left:0.5px;top:5.199999999999989px;">Manual</div>
</div>
<svg style="left:5.3px;top:230.0px" width="24" height="24" viewBox="0 0 24 24"><use href="#gear"/></svg>
<div class="t" style="left:33px;top:233.2px;letter-spacing:-0.323px;">Application Layer Gateway S<span style="letter-spacing:-1.6px">...</span></div>
<div class="t" style="left:278.5px;top:233.2px;letter-spacing:-0.273px;">Provides sup<span style="letter-spacing:-1.6px">...</span></div>
<div style="position:absolute;left:504.8px;top:228.0px;width:43.2px;height:28.5px;overflow:hidden">
<div class="t" style="left:0.5px;top:5.199999999999989px;">Manual</div>
</div>
<svg style="left:5.3px;top:258.5px" width="24" height="24" viewBox="0 0 24 24"><use href="#gear"/></svg>
<div class="t" style="left:33px;top:261.7px;letter-spacing:-0.275px;">AppX Deployment Service (A<span style="letter-spacing:-1.6px">...</span></div>
<div class="t" style="left:278.5px;top:261.7px;letter-spacing:-0.013px;">Provides infr<span style="letter-spacing:-1.6px">...</span></div>
<div class="t" style="left:407.5px;top:261.7px;letter-spacing:0.399px;">Running</div>
<div style="position:absolute;left:504.8px;top:256.5px;width:43.2px;height:28.5px;overflow:hidden">
<div class="t" style="left:0.5px;top:5.199999999999989px;">Manual</div>
</div>
<svg style="left:5.3px;top:287.0px" width="24" height="24" viewBox="0 0 24 24"><use href="#gear"/></svg>
<div class="t" style="left:33px;top:290.2px;letter-spacing:0.074px;">Auto Time Zone Updater</div>
<div class="t" style="left:278.5px;top:290.2px;letter-spacing:0.064px;">Automaticall<span style="letter-spacing:-1.6px">...</span></div>
<div style="position:absolute;left:504.8px;top:285.0px;width:43.2px;height:28.5px;overflow:hidden">
<div class="t" style="left:0.5px;top:5.199999999999989px;">Disabled</div>
</div>
<svg style="left:5.3px;top:315.5px" width="24" height="24" viewBox="0 0 24 24"><use href="#gear"/></svg>
<div class="t" style="left:33px;top:318.70000000000005px;letter-spacing:-0.986px;">AVCTP service</div>
<div class="t" style="left:278.5px;top:318.70000000000005px;letter-spacing:-0.101px;">This is Audio<span style="letter-spacing:-1.6px">...</span></div>
<div class="t" style="left:407.5px;top:318.70000000000005px;letter-spacing:0.399px;">Running</div>
<div style="position:absolute;left:504.8px;top:313.5px;width:43.2px;height:28.5px;overflow:hidden">
<div class="t" style="left:0.5px;top:5.2000000000000455px;">Manual</div>
</div>
<svg style="left:5.3px;top:344.0px" width="24" height="24" viewBox="0 0 24 24"><use href="#gear"/></svg>
<div class="t" style="left:33px;top:347.20000000000005px;letter-spacing:0.072px;">Background Intelligent Tran<span style="letter-spacing:-1.6px">...</span></div>
<div class="t" style="left:278.5px;top:347.20000000000005px;letter-spacing:-0.249px;">Transfers file<span style="letter-spacing:-1.6px">...</span></div>
<div class="t" style="left:407.5px;top:347.20000000000005px;letter-spacing:0.399px;">Running</div>
<div style="position:absolute;left:504.8px;top:342.0px;width:43.2px;height:28.5px;overflow:hidden">
<div class="t" style="left:0.5px;top:5.2000000000000455px;">Automatic</div>
</div>
<svg style="left:5.3px;top:372.5px" width="24" height="24" viewBox="0 0 24 24"><use href="#gear"/></svg>
<div class="t" style="left:33px;top:375.70000000000005px;letter-spacing:-0.166px;">Background Tasks Infrastruc<span style="letter-spacing:-1.6px">...</span></div>
<div class="t" style="left:278.5px;top:375.70000000000005px;letter-spacing:0.169px;">Windows inf<span style="letter-spacing:-1.6px">...</span></div>
<div class="t" style="left:407.5px;top:375.70000000000005px;letter-spacing:0.399px;">Running</div>
<div style="position:absolute;left:504.8px;top:370.5px;width:43.2px;height:28.5px;overflow:hidden">
<div class="t" style="left:0.5px;top:5.2000000000000455px;">Automatic</div>
</div>
<svg style="left:5.3px;top:401.0px" width="24" height="24" viewBox="0 0 24 24"><use href="#gear"/></svg>
<div class="t" style="left:33px;top:404.20000000000005px;letter-spacing:-0.128px;">Base Filtering Engine</div>
<div class="t" style="left:278.5px;top:404.20000000000005px;letter-spacing:-0.469px;">The Base Filt<span style="letter-spacing:-1.6px">...</span></div>
<div class="t" style="left:407.5px;top:404.20000000000005px;letter-spacing:0.399px;">Running</div>
<div style="position:absolute;left:504.8px;top:399.0px;width:43.2px;height:28.5px;overflow:hidden">
<div class="t" style="left:0.5px;top:5.2000000000000455px;">Automatic</div>
</div>
<svg style="left:5.3px;top:429.5px" width="24" height="24" viewBox="0 0 24 24"><use href="#gear"/></svg>
<div class="t" style="left:33px;top:432.70000000000005px;letter-spacing:-0.860px;">BcastDVRUserService_372a1</div>
<div class="t" style="left:278.5px;top:432.70000000000005px;letter-spacing:-0.465px;">This user ser<span style="letter-spacing:-1.6px">...</span></div>
<div style="position:absolute;left:504.8px;top:427.5px;width:43.2px;height:28.5px;overflow:hidden">
<div class="t" style="left:0.5px;top:5.2000000000000455px;">Manual</div>
</div>
<svg style="left:5.3px;top:458.0px" width="24" height="24" viewBox="0 0 24 24"><use href="#gear"/></svg>
<div class="t" style="left:33px;top:461.20000000000005px;letter-spacing:-0.241px;">BitLocker Drive Encryption S<span style="letter-spacing:-1.6px">...</span></div>
<div class="t" style="left:278.5px;top:461.20000000000005px;letter-spacing:-1.185px;">BDESVC hos<span style="letter-spacing:-1.6px">...</span></div>
<div class="t" style="left:407.5px;top:461.20000000000005px;letter-spacing:0.399px;">Running</div>
<div style="position:absolute;left:504.8px;top:456.0px;width:43.2px;height:28.5px;overflow:hidden">
<div class="t" style="left:0.5px;top:5.2000000000000455px;">Manual</div>
</div>
<svg style="left:5.3px;top:486.5px" width="24" height="24" viewBox="0 0 24 24"><use href="#gear"/></svg>
<div class="t" style="left:33px;top:489.70000000000005px;letter-spacing:-0.412px;">Block Level Backup Engine S<span style="letter-spacing:-1.6px">...</span></div>
<div class="t" style="left:278.5px;top:489.70000000000005px;letter-spacing:-0.828px;">The WBENGI<span style="letter-spacing:-1.6px">...</span></div>
<div style="position:absolute;left:504.8px;top:484.5px;width:43.2px;height:28.5px;overflow:hidden">
<div class="t" style="left:0.5px;top:5.2000000000000455px;">Manual</div>
</div>
<svg style="left:5.3px;top:515.0px" width="24" height="24" viewBox="0 0 24 24"><use href="#gear"/></svg>
<div class="t" style="left:33px;top:518.2px;letter-spacing:-0.108px;">Bluetooth Audio Gateway Se<span style="letter-spacing:-1.6px">...</span></div>
<div class="t" style="left:278.5px;top:518.2px;letter-spacing:-0.348px;">Service supp<span style="letter-spacing:-1.6px">...</span></div>
<div class="t" style="left:407.5px;top:518.2px;letter-spacing:0.399px;">Running</div>
<div style="position:absolute;left:504.8px;top:513.0px;width:43.2px;height:28.5px;overflow:hidden">
<div class="t" style="left:0.5px;top:5.2000000000000455px;">Manual</div>
</div>
<svg style="left:5.3px;top:543.5px" width="24" height="24" viewBox="0 0 24 24"><use href="#gear"/></svg>
<div class="t" style="left:33px;top:546.7px;letter-spacing:0.020px;">Bluetooth Support Service</div>
<div class="t" style="left:278.5px;top:546.7px;letter-spacing:-0.107px;">The Bluetoo<span style="letter-spacing:-1.6px">...</span></div>
<div class="t" style="left:407.5px;top:546.7px;letter-spacing:0.399px;">Running</div>
<div style="position:absolute;left:504.8px;top:541.5px;width:43.2px;height:28.5px;overflow:hidden">
<div class="t" style="left:0.5px;top:5.2000000000000455px;">Manual</div>
</div>
<svg style="left:5.3px;top:572.0px" width="24" height="24" viewBox="0 0 24 24"><use href="#gear"/></svg>
<div class="t" style="left:33px;top:575.2px;letter-spacing:-0.102px;">Bluetooth User Support Serv<span style="letter-spacing:-1.6px">...</span></div>
<div class="t" style="left:278.5px;top:575.2px;letter-spacing:-0.107px;">The Bluetoo<span style="letter-spacing:-1.6px">...</span></div>
<div class="t" style="left:407.5px;top:575.2px;letter-spacing:0.399px;">Running</div>
<div style="position:absolute;left:504.8px;top:570.0px;width:43.2px;height:28.5px;overflow:hidden">
<div class="t" style="left:0.5px;top:5.2000000000000455px;">Manual</div>
</div>
<svg style="left:5.3px;top:600.5px" width="24" height="24" viewBox="0 0 24 24"><use href="#gear"/></svg>
<div class="t" style="left:33px;top:603.7px;letter-spacing:-0.375px;">BluetoothUserService_372a1</div>
<div class="t" style="left:278.5px;top:603.7px;letter-spacing:-0.107px;">The Bluetoo<span style="letter-spacing:-1.6px">...</span></div>
<div class="t" style="left:407.5px;top:603.7px;letter-spacing:0.399px;">Running</div>
<div style="position:absolute;left:504.8px;top:598.5px;width:43.2px;height:28.5px;overflow:hidden">
<div class="t" style="left:0.5px;top:5.2000000000000455px;">Manual</div>
</div>
<svg style="left:5.3px;top:629.0px" width="24" height="24" viewBox="0 0 24 24"><use href="#gear"/></svg>
<div class="t" style="left:33px;top:632.2px;letter-spacing:-0.160px;">Bonjour Service</div>
<div class="t" style="left:278.5px;top:632.2px;letter-spacing:-0.364px;">Enables har<span style="letter-spacing:-1.6px">...</span></div>
<div class="t" style="left:407.5px;top:632.2px;letter-spacing:0.399px;">Running</div>
<div style="position:absolute;left:504.8px;top:627.0px;width:43.2px;height:28.5px;overflow:hidden">
<div class="t" style="left:0.5px;top:5.2000000000000455px;">Automatic</div>
</div>
<svg style="left:5.3px;top:657.5px" width="24" height="24" viewBox="0 0 24 24"><use href="#gear"/></svg>
<div class="t" style="left:33px;top:660.7px;letter-spacing:-0.319px;">Capability Access Manager S<span style="letter-spacing:-1.6px">...</span></div>
<div class="t" style="left:278.5px;top:660.7px;letter-spacing:-0.245px;">Provides faci<span style="letter-spacing:-1.6px">...</span></div>
<div class="t" style="left:407.5px;top:660.7px;letter-spacing:0.399px;">Running</div>
<div style="position:absolute;left:504.8px;top:655.5px;width:43.2px;height:28.5px;overflow:hidden">
<div class="t" style="left:0.5px;top:5.2000000000000455px;">Manual</div>
</div>
<svg style="left:5.3px;top:686.0px" width="24" height="24" viewBox="0 0 24 24"><use href="#gear"/></svg>
<div class="t" style="left:33px;top:689.2px;letter-spacing:-0.565px;">CaptureService_16b00421</div>
<div class="t" style="left:278.5px;top:689.2px;letter-spacing:-0.169px;">Enables opti<span style="letter-spacing:-1.6px">...</span></div>
<div style="position:absolute;left:504.8px;top:684.0px;width:43.2px;height:28.5px;overflow:hidden">
<div class="t" style="left:0.5px;top:5.2000000000000455px;">Manual</div>
</div>
<svg style="left:5.3px;top:714.5px" width="24" height="24" viewBox="0 0 24 24"><use href="#gear"/></svg>
<div class="t" style="left:33px;top:717.7px;letter-spacing:-0.565px;">CaptureService_16b00421</div>
<div class="t" style="left:278.5px;top:717.7px;letter-spacing:-0.169px;">Enables opti<span style="letter-spacing:-1.6px">...</span></div>
<div style="position:absolute;left:504.8px;top:712.5px;width:43.2px;height:28.5px;overflow:hidden">
<div class="t" style="left:0.5px;top:5.2000000000000455px;">Manual</div>
</div>
</div>
<div class="b" style="left:1159px;top:166px;width:24px;height:752px;background:#f0f0f0"></div>
<div class="b" style="left:1159px;top:191px;width:24px;height:55px;background:#cdcdcd"></div>
<svg style="left:1165px;top:174px" width="12" height="8"><path d="M1 6.5 L6 1.5 L11 6.5" fill="none" stroke="#5a5a5a" stroke-width="2"/></svg>
<svg style="left:1165px;top:899px" width="12" height="8"><path d="M1 1.5 L6 6.5 L11 1.5" fill="none" stroke="#5a5a5a" stroke-width="2"/></svg>
<div class="b" style="left:611px;top:918px;width:572px;height:25px;background:#f0f0f0"></div>
<div class="b" style="left:636px;top:918px;width:360px;height:25px;background:#cdcdcd"></div>
<svg style="left:618px;top:924px" width="8" height="12"><path d="M6.5 1 L1.5 6 L6.5 11" fill="none" stroke="#5a5a5a" stroke-width="2"/></svg>
<svg style="left:1140px;top:924px" width="8" height="12"><path d="M1.5 1 L6.5 6 L1.5 11" fill="none" stroke="#5a5a5a" stroke-width="2"/></svg>
<svg style="left:285px;top:944px" width="200" height="32"><path d="M96 2.5 L108 29 H185 L195 2.5" fill="#f0f0f0" stroke="#a0a0a0" stroke-width="1.2"/><path d="M4.5 2 L16.5 29 H95.5 L106 2" fill="#fff" stroke="#808080" stroke-width="1.2"/><path d="M4 1.5 H107" stroke="#fff" stroke-width="2"/></svg>
<div class="t" style="left:305px;top:951.3px;letter-spacing:-0.450px;">Extended</div>
<div class="t" style="left:395.5px;top:951.3px;letter-spacing:0.038px;">Standard</div>
<div class="b" style="left:1191px;top:125px;width:284px;height:848px;background:#fff;border-top:3px solid #8e8e8e;border-left:3px solid #8a8a8a;border-right:2px solid #e6e6e6;border-bottom:2px solid #e6e6e6"></div>
<div class="b" style="left:1191px;top:125px;width:284px;height:1px;background:#b4b4b4"></div>
<div class="b" style="left:1191px;top:125px;width:1px;height:848px;background:#a8a8a8"></div>
<div class="b" style="left:1194px;top:128px;width:279px;height:2px;background:#fff"></div>
<div class="b" style="left:1194px;top:130px;width:279px;height:28px;background:#f0f0f0"></div>
<div class="b" style="left:1194px;top:158px;width:279px;height:1px;background:#a8a8a8"></div>
<div class="b" style="left:1194px;top:159px;width:279px;height:1.5px;background:#fff"></div>
<div class="b" style="left:1194px;top:160.5px;width:279px;height:38px;background:linear-gradient(#bad2ea,#98b3d1)"></div>
<div class="t" style="left:1201.5px;top:135.6px;font-weight:bold;letter-spacing:-0.395px;">Actions</div>
<div class="t" style="left:1204px;top:172px;letter-spacing:-0.758px;">Services</div>
<svg style="left:1449px;top:176px" width="15" height="8"><path d="M0 8 L7.5 0 L15 8Z" fill="#000"/></svg>
<div class="t" style="left:1240px;top:208px;letter-spacing:0.331px;">More Actions</div>
<svg style="left:1453px;top:208px" width="8" height="15"><path d="M0 0 L8 7.5 L0 15Z" fill="#000"/></svg>
<div class="b" style="left:0px;top:974px;width:1476px;height:1px;background:#e3e3e3"></div>
<div class="b" style="left:1145px;top:977px;width:1px;height:31px;background:#d4d4d4"></div>
<div class="b" style="left:1345px;top:977px;width:1px;height:31px;background:#d4d4d4"></div>
<div class="b" style="left:1472px;top:977px;width:1px;height:31px;background:#d4d4d4"></div>
<div class="b" style="left:0px;top:1008px;width:1476px;height:1px;background:#fff"></div>
<div class="b" style="left:0px;top:1009px;width:1476px;height:1px;background:#0c0c0c"></div>
</body></html>
